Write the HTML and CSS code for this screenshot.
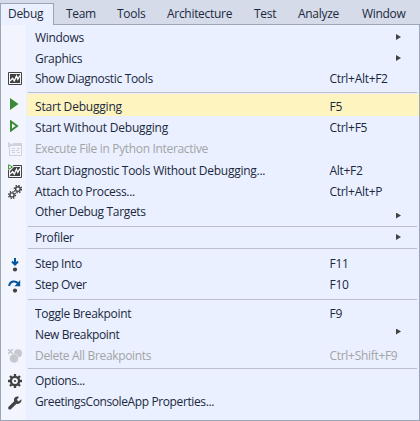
FILE: index.html
```
<!DOCTYPE html>
<html lang="en">
<head>
<meta charset="utf-8">
<title>Debug menu</title>
<link rel="stylesheet" href="styles.css">
</head>
<body>
<nav class="menubar">
<span class="tab active">Debug</span><span class="tab team">Team</span><span class="tab tools">Tools</span><span class="tab architecture">Architecture</span><span class="tab test">Test</span><span class="tab analyze">Analyze</span><span class="tab window">Window</span>
</nav>
<main class="menu">
<div class="row"><i></i><span class="label">Windows</span><b class="arrow"></b></div>
<div class="row"><i></i><span class="label">Graphics</span><b class="arrow"></b></div>
<div class="row tight"><i class="raised"><svg width="14" height="13" viewBox="0 0 14 13"><path d="M.5.5h13v12H.5z" fill="#f2f4fe" stroke="#424242"/><path d="M2 2h10v9H2z" fill="#424242"/><path d="M2 9l2.6-2.6L6.3 9l2.2-5 1.3 3.2L12 3.5" fill="none" stroke="#fff" stroke-width="1.3"/></svg></i><span class="label snug">Show Diagnostic Tools</span><span class="key">Ctrl+Alt+F2</span></div>
<hr class="first">
<div class="row selected"><i><svg width="9" height="12" viewBox="0 0 9 12"><path d="M0 0l8.5 6L0 12z" fill="#388a34"/></svg></i><span class="label wide">Start Debugging</span><span class="key">F5</span></div>
<div class="row after-selected"><i><svg width="9" height="12" viewBox="0 0 9 12"><path d="M1 1.5L7 6 1 10.5z" fill="#fff" stroke="#388a34" stroke-width="2"/></svg></i><span class="label wide">Start Without Debugging</span><span class="key">Ctrl+F5</span></div>
<div class="row disabled"><i class="raised"><svg width="14" height="14" viewBox="0 0 14 14"><path d="M5 1h9v3H4zM0 0l5 3-5 3z" fill="#d0d3dc"/><path d="M1.5 6v7.5h12V3" fill="none" stroke="#d0d3dc"/><path d="M4 6.5h3m2 0h3M3 8.5h4m1 0h3M4 10.5h3m2 0h3" fill="none" stroke="#d0d3dc"/></svg></i><span class="label snug">Execute File in Python Interactive</span></div>
<div class="row loose"><i class="raised"><svg width="14" height="14" viewBox="0 0 14 14"><path d="M5 1.5h8.5v12H.5V6" fill="#f2f4fe" stroke="#424242"/><path d="M6 3h6v9H2V7z" fill="#424242"/><path d="M2 10.2l2.6-2.6 1.7 2.6 2.2-5 1.3 3.2L12 4.7" fill="none" stroke="#fff" stroke-width="1.3"/><path d="M.6.8L4.5 3 .6 5.3z" fill="#fff" stroke="#388a34"/></svg></i><span class="label long">Start Diagnostic Tools Without Debugging...</span><span class="key">Alt+F2</span></div>
<div class="row"><i class="raised"><svg width="14" height="14" viewBox="0 0 14 14" fill="none" stroke="#424242"><circle cx="9.9" cy="4.1" r="2.3" stroke-width="1.4"/><circle cx="9.9" cy="4.1" r="3.6" stroke-width="1.5" stroke-dasharray="1.4 1.43"/><circle cx="4" cy="10" r="2.1" stroke-width="1.4"/><circle cx="4" cy="10" r="3.4" stroke-width="1.5" stroke-dasharray="1.3 1.37"/></svg></i><span class="label snug">Attach to Process...</span><span class="key">Ctrl+Alt+P</span></div>
<div class="row tight"><i></i><span class="label snug">Other Debug Targets</span><b class="arrow low"></b></div>
<hr class="before-profiler">
<div class="row profiler"><i></i><span class="label">Profiler</span><b class="arrow"></b></div>
<hr class="after-profiler">
<div class="row step"><i><svg width="8" height="14" viewBox="0 0 8 14"><path d="M4 0v6M1 3.5l3 3 3-3" fill="none" stroke="#00539c" stroke-width="2"/><circle cx="4" cy="11.5" r="2.1" fill="#424242"/></svg></i><span class="label tighter">Step Into</span><span class="key">F11</span></div>
<div class="row"><i><svg width="14" height="14" viewBox="0 0 14 14"><path d="M1.2 7C1.8 1.7 8 1 10.5 5" fill="none" stroke="#00539c" stroke-width="2"/><path d="M12.2 1v6.3H6.5z" fill="#00539c"/><circle cx="7" cy="11.6" r="2.1" fill="#424242"/></svg></i><span class="label tighter">Step Over</span><span class="key">F10</span></div>
<hr class="after-step">
<div class="row toggle"><i></i><span class="label">Toggle Breakpoint</span><span class="key">F9</span></div>
<div class="row"><i></i><span class="label tighter">New Breakpoint</span><b class="arrow high"></b></div>
<div class="row disabled"><i class="raised"><svg width="14" height="14" viewBox="0 0 14 14" fill="#c6c8d0"><circle cx="10" cy="4.3" r="4"/><circle cx="6" cy="9.5" r="4.5" stroke="#f2f4fe" stroke-width=".5"/><path d="M0 0l5 5M5 0L0 5" stroke="#c6c8d0" stroke-width="1.6"/></svg></i><span class="label snug">Delete All Breakpoints</span><span class="key">Ctrl+Shift+F9</span></div>
<hr class="before-options">
<div class="row options"><i class="raised"><svg width="14" height="14" viewBox="0 0 14 14" fill="none" stroke="#424242"><circle cx="7" cy="7" r="4.1" stroke-width="2.4"/><path d="M7 0v2.5M7 11.5V14M0 7h2.5M11.5 7H14M2 2l2 2M10 10l2 2M12 2l-2 2M4 10l-2 2" stroke-width="2.3"/><circle cx="7" cy="7" r="1.1" fill="#424242" stroke="none"/></svg></i><span class="label tighter">Options...</span></div>
<div class="row"><i><svg width="14" height="14" viewBox="0 0 14 14"><path d="M13.3 3.2L10.7 5.4 8.8 3.7 11 .9C9-.1 6.4 1 6 3.3c-.1.8 0 1.4.2 2L.6 10.8c-1.4 1.6.8 3.7 2.3 2.4l5.6-5.5c3 .9 5.6-1.6 4.8-4.5z" fill="#424242"/></svg></i><span class="label tighter">GreetingsConsoleApp Properties...</span></div>
</main>
</body>
</html>
```
FILE: styles.css
```
* { box-sizing: border-box; }
body { margin: 0; width: 420px; height: 421px; overflow: hidden; background: #d6dbe9; color: #1b293e; font: 12px/20px "Open Sans", "Noto Sans", sans-serif; letter-spacing: -.3px; display: flex; flex-direction: column; }
.menubar { display: flex; height: 25px; padding-top: 3px; flex: none; position: relative; z-index: 1; box-shadow: inset 0 -1px #9ba7b7; }
.tab { height: 21px; line-height: 21px; white-space: nowrap; }
.active { width: 54px; height: 22px; padding-left: 7px; background: #eaf0ff; border: 1px solid #9ba7b7; border-bottom: 0; line-height: 19px; }
.team { width: 51px; padding-left: 12px; }
.tools { width: 50px; padding-left: 12px; }
.architecture { width: 87px; padding-left: 12px; }
.test { width: 44px; padding-left: 12px; }
.analyze { width: 64px; padding-left: 12px; }
.window { padding-left: 12px; }
.menu { display: flex; flex-direction: column; height: 396px; padding: 3px 0 0; border: 1px solid #9ba7b7; border-top: 0; background: linear-gradient(90deg, #f2f4fe 25px, #eaf0ff 25px); }
.row { display: grid; grid-template-columns: 26px 302.5px 1fr; height: 21px; flex: none; align-items: center; white-space: nowrap; }
.row i { width: 26px; height: 20px; padding-left: 1px; display: flex; align-items: center; justify-content: center; }
.row .raised { margin-top: -2px; }
.label, .key { margin-top: -2px; }
.label { padding-left: 8px; }
.key { grid-column: 3; }
.arrow { margin-left: 66.5px; margin-bottom: 3px; width: 5px; height: 6px; background: #424242; clip-path: polygon(0 0, 100% 50%, 0 100%); }
.arrow.low { margin-bottom: -6px; }
.arrow.high { margin-bottom: 8px; }
.wide { letter-spacing: -.2px; }
.long { letter-spacing: -.26px; }
.snug { letter-spacing: -.33px; }
.tighter { letter-spacing: -.39px; }
.tight { margin-top: -1px; }
.loose { margin-top: 1px; }
.disabled { color: #a2a4a5; }
hr { width: 389px; height: 1px; flex: none; margin: 0 0 0 27px; border: 0; background: #bcbfcb; }
hr.first { margin-top: 2px; margin-bottom: 1px; }
.selected { height: 22px; padding-top: 3px; background: linear-gradient(90deg, transparent 26px, #fdf4bf 26px); }
.selected .label, .selected .key { margin-top: 0; }
.selected i { margin-top: -7px; }
.after-selected { margin-top: 2px; }
.after-selected i { margin-top: -5px; }
hr.before-profiler { margin-top: 3px; }
.profiler { margin-top: 1px; }
hr.after-profiler { margin-top: -1px; }
.step { margin-top: 5px; }
hr.after-step { margin-top: 3px; }
.toggle { margin-top: 4px; }
hr.before-options { margin-top: 1px; }
.options { margin-top: 2px; }
```
